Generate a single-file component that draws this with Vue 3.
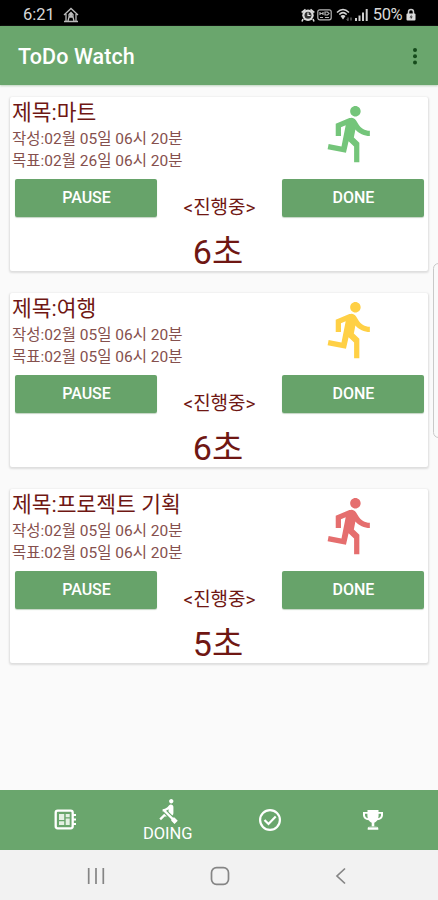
<script setup>
const tasks = [
  { title: '제목:마트', created: '작성:02월 05일 06시 20분', goal: '목표:02월 26일 06시 20분', time: '6초', tone: 'green' },
  { title: '제목:여행', created: '작성:02월 05일 06시 20분', goal: '목표:02월 05일 06시 20분', time: '6초', tone: 'yellow' },
  { title: '제목:프로젝트 기획', created: '작성:02월 05일 06시 20분', goal: '목표:02월 05일 06시 20분', time: '5초', tone: 'red' }
]
</script>

<template>
  <div class="screen">
    <div class="status">
      <span class="clock">6:21</span>
      <svg class="house" viewBox="0 0 16 16" width="16" height="16" fill="none" stroke="#bbb" stroke-width="1.3">
        <path d="M1 8 8 1.5 15 8M3 7v7.5M13 7v7.5M1 14.5h14M5 14l1-4h4l1 4M6 7.5 8 5.5l2 2v2H6z" />
        <circle cx="8" cy="7.5" r="1" fill="#ddd" />
      </svg>
      <div class="status-right">
        <svg width="14" height="14" viewBox="0 0 14 14">
          <path d="M0 4 4 .8 5 2 1.5 5zM14 4 10 .8 9 2l3.500 3z" fill="#ddd" />
          <circle cx="7" cy="7.300" r="5.700" fill="#ddd" />
          <path d="M2 11 1 13.500M12 11l1 2.500" stroke="#ddd" stroke-width="1.600" />
          <circle cx="7" cy="7.300" r="3.500" fill="#333" />
          <path d="M7 4.500v3h2.500" fill="none" stroke="#eee" stroke-width="1.200" />
        </svg>
        <svg class="hd" width="15" height="12" viewBox="0 0 15 12" fill="none" stroke="#b5b5b5" stroke-width="1.200">
          <rect x=".8" y=".8" width="13.400" height="10" rx="2" />
          <path d="M3 3v3M3 4.500h3M6 3v3M8 3v3h2.500L12 4.500 10.500 3zM3 8.500h3M8 8.500h4" />
        </svg>
        <svg class="wifi" width="17" height="14" viewBox="0 0 17 14" fill="none" stroke="#d5d5d5" stroke-width="1.500">
          <path d="M1 4.500q6-6 12 0M3.300 6.500q3.700-3.700 7.400 0" />
          <path d="m4.500 8 2.500 3.500L9.500 8Q7 6 4.500 8z" fill="#d5d5d5" stroke="none" />
          <path d="M12 9.500v3m-1.200-1.200L12 12.700m3-.2v-3" stroke="#888" stroke-width="1" />
        </svg>
        <svg class="signal" width="13" height="13" viewBox="0 0 13 13" fill="#cfcfcf">
          <path d="M0 10h2v3H0zM3.500 7.500h2V13h-2zM7 4.500h2V13H7zM10.700 1h2v12h-2z" />
        </svg>
        <span class="percent">50%</span>
        <svg class="lock" width="10" height="13" viewBox="0 0 10 13">
          <path d="M2.500 6V4a2.500 2.500 0 0 1 5 0v2" fill="none" stroke="#ccc" stroke-width="1.500" />
          <rect x=".5" y="5.500" width="9" height="7" rx="1" fill="#ddd" />
          <path d="M5.500 6.500 3.500 9.500h1.300v2l2-3H5.500z" fill="#444" />
        </svg>
      </div>
    </div>

    <header class="bar">
      <h1>ToDo Watch</h1>
      <svg width="6" height="18" viewBox="0 0 6 18" fill="#154b1b">
        <circle cx="3" cy="3" r="2" /><circle cx="3" cy="9.200" r="2" /><circle cx="3" cy="15.400" r="2" />
      </svg>
    </header>

    <main class="list">
      <article v-for="task in tasks" :key="task.title" class="card">
        <div class="top">
          <div class="info">
            <h2>{{ task.title }}</h2>
            <p>{{ task.created }}</p>
            <p>{{ task.goal }}</p>
          </div>
          <svg class="runner" :class="task.tone" viewBox="0 0 24 24" fill="currentColor">
            <path d="M13.490 5.480c1.100 0 2-.9 2-2s-.9-2-2-2-2 .9-2 2 .9 2 2 2zm-3.600 13.900l1-4.400 2.100 2v6h2v-7.500l-2.100-2 .6-3c1.300 1.500 3.300 2.500 5.500 2.500v-2c-1.900 0-3.500-1-4.300-2.400l-1-1.600c-.4-.6-1-1-1.700-1-.3 0-.5.1-.8.1l-5.200 2.200v4.700h2v-3.400l1.800-.7-1.600 8.100-4.900-1-.4 2 7 1.400z" />
          </svg>
        </div>
        <div class="actions">
          <button>PAUSE</button>
          <span class="state">&lt;진행중&gt;</span>
          <button>DONE</button>
        </div>
        <div class="time">{{ task.time }}</div>
      </article>
      <div class="edge"></div>
    </main>

    <nav class="tabs">
      <div class="tab">
        <svg class="board" width="23" height="22" viewBox="0 0 23 22">
          <rect x="1.700" y="1.700" width="17" height="17.600" rx="2" fill="none" stroke="#fff" stroke-width="2.300" />
          <path d="M19 5h3v2h-3zM19 9.500h3v2h-3zM19 14h3v2h-3z" fill="#fff" />
          <path d="M5 5h5.200v6H5zM11.700 5h4v3.200h-4zM5 12.300h5.200V16H5zM11.700 9.500h4V16h-4z" fill="#e4f0e3" />
        </svg>
      </div>
      <div class="tab active">
        <svg width="26" height="26" viewBox="0 0 24 24" fill="#fff">
          <path d="M8.500 14.500 4 19l1.500 1.500L9 17h2zM15 1c-1.100 0-2 .9-2 2s.9 2 2 2 2-.9 2-2-.9-2-2-2zm6 20.010L18 24l-2.990-3.010V19.500l-7.100-7.090c-.31.050-.61.070-.91.070v-2.160c1.660.030 3.610-.87 4.670-2.040l1.400-1.550c.19-.21.43-.38.69-.5.29-.14.62-.23.96-.23h.030C15.990 6.010 17 7.020 17 8.260v5.750c0 .84-.35 1.610-.92 2.160l-3.580-3.580v-2.270c-.63.520-1.430 1.020-2.290 1.390L16.500 18H18z" />
        </svg>
        <span>DOING</span>
      </div>
      <div class="tab">
        <svg width="24" height="24" viewBox="0 0 24 24" fill="none" stroke="#fff" stroke-width="2.200">
          <circle cx="12" cy="12" r="9.900" /><path d="m6.500 12 4 4 7.200-7.500" />
        </svg>
      </div>
      <div class="tab">
        <svg width="22" height="22" viewBox="0 0 22 22" fill="#fff">
          <path d="M5.500 1h11v2H21v3c0 3-2.500 5-5.700 5.300-.8 1.300-1.800 2-3 2.500v3.700H14c1.500 0 2.300.8 2.300 2v1.300H5.700v-1.300c0-1.200.8-2 2.300-2h1.700v-3.700c-1.200-.5-2.200-1.200-3-2.500C3.500 11 1 9 1 6V3h4.500zM3 4.700V6c0 1.500 1 2.700 2.800 3.200-.4-1.500-.5-3-.4-4.500zm13.600 0c.1 1.500 0 3-.4 4.500C18 8.700 19 7.500 19 6V4.700z" fill-rule="evenodd" />
          <path d="M6.500 17.900h9" stroke="#6aa66d" stroke-width=".8" />
        </svg>
      </div>
    </nav>

    <footer class="system">
      <svg width="18" height="18" viewBox="0 0 18 18" stroke="#858585" stroke-width="1.700"><path d="M1.700 1v16M9 1v16M16.300 1v16" /></svg>
      <svg width="20" height="20" viewBox="0 0 20 20" fill="none" stroke="#858585" stroke-width="1.700"><rect x="1.500" y="1.700" width="17" height="16.600" rx="5" /></svg>
      <svg width="12" height="18" viewBox="0 0 12 18" fill="none" stroke="#858585" stroke-width="1.700"><path d="M10 1.500 2 9l8 7.500" /></svg>
    </footer>
  </div>
</template>

<style>
body { margin: 0; }
</style>

<style scoped>
.screen {
  width: 438px;
  height: 900px;
  display: flex;
  flex-direction: column;
  overflow: hidden;
  background: #fafafa;
  font-family: Roboto, "Noto Sans CJK KR", sans-serif;
}
.status {
  flex: none;
  box-sizing: border-box;
  height: 26px;
  padding: 3px 22px 0 23px;
  display: flex;
  align-items: center;
  background: #000;
  color: #d8d8d8;
  font-size: 16.500px;
  line-height: 20px;
}
.house { margin-left: 8px; }
.status-right { margin-left: auto; display: flex; align-items: center; }
.hd { margin-left: 2px; }
.wifi { margin-left: 4px; }
.signal { margin-left: 2px; }
.percent { margin-left: 5px; letter-spacing: -.5px; }
.lock { margin-left: 4px; }
.bar {
  flex: none;
  box-sizing: border-box;
  height: 59px;
  padding: 0 20px 0 18px;
  display: flex;
  align-items: center;
  justify-content: space-between;
  background: #6aa66d;
  box-shadow: 0 1px 2px #bdd2bd;
}
.bar h1 {
  margin: 3px 0 0;
  font-size: 21.500px;
  line-height: 28px;
  font-weight: 500;
  letter-spacing: .1px;
  color: #fff;
}
.list {
  position: relative;
  flex: 1;
  padding: 12px 10px 0;
  display: flex;
  flex-direction: column;
  gap: 21.800px;
}
.card {
  flex: none;
  box-sizing: border-box;
  height: 174px;
  padding: 0 4px 0 2px;
  border-radius: 2px;
  background: #fff;
  box-shadow: 0 1px 2px 1px #dedede;
  color: #6f1713;
}
.top { height: 82px; display: flex; justify-content: space-between; }
.info { padding-top: 1px; white-space: nowrap; }
.info h2 { margin: 0; font-size: 21.500px; line-height: 30px; font-weight: 400; }
.info p { margin: 0; font-size: 15.500px; line-height: 22px; color: #85504d; }
.runner { flex: none; width: 63px; height: 63px; margin: 5px 41px 0 0; }
.green { color: #74c57a; }
.yellow { color: #ffd045; }
.red { color: #e56e6e; }
.actions { display: flex; justify-content: space-between; padding-left: 3px; }
.actions button {
  width: 142px;
  height: 38px;
  padding: 0 0 0 1px;
  border: 0;
  border-radius: 2px;
  background: #67a36a;
  box-shadow: 0 1px 1px #c4d4c4;
  color: #fff;
  font: 500 16px/38px Roboto, sans-serif;
}
.state { padding-top: 14px; font-size: 19px; line-height: 30px; white-space: nowrap; }
.time { margin-top: 8px; text-align: center; font-size: 34px; line-height: 42px; }
.edge {
  position: absolute;
  top: 178px;
  right: -6px;
  box-sizing: border-box;
  width: 11px;
  height: 175px;
  border: 1px solid #c9c9c9;
  border-radius: 6px;
  background: #fafafa;
}
.tabs {
  flex: none;
  box-sizing: border-box;
  height: 60px;
  padding: 0 14px;
  display: grid;
  grid-template-columns: repeat(4, 1fr);
  background: #6aa66d;
}
.tab { display: flex; flex-direction: column; align-items: center; justify-content: center; color: #fff; }
.active { justify-content: flex-start; padding-top: 8px; }
.active span { font-size: 16.500px; line-height: 19px; }
.system {
  flex: none;
  box-sizing: border-box;
  height: 50px;
  padding: 2px 91px 0 87px;
  display: flex;
  align-items: center;
  justify-content: space-between;
  background: #f2f2f2;
}
</style>
